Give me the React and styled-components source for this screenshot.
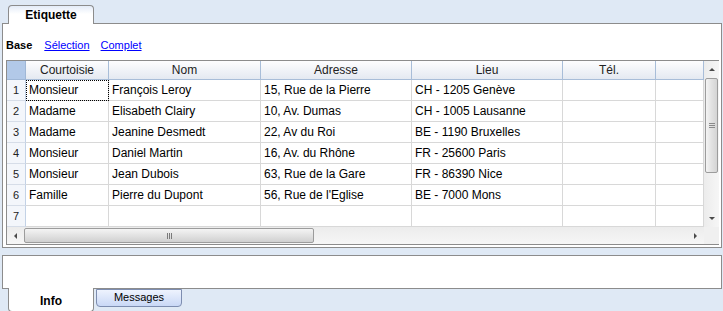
import styled, { createGlobalStyle } from "styled-components";

const GlobalStyle = createGlobalStyle`
  body {
    margin: 0;
    font-family: "Liberation Sans", Arial, sans-serif;
  }
`;

const rows = [
  ["Monsieur", "François Leroy", "15, Rue de la Pierre", "CH - 1205 Genève"],
  ["Madame", "Elisabeth Clairy", "10, Av. Dumas", "CH - 1005 Lausanne"],
  ["Madame", "Jeanine Desmedt", "22, Av du Roi", "BE - 1190 Bruxelles"],
  ["Monsieur", "Daniel Martin", "16, Av. du Rhône", "FR - 25600 Paris"],
  ["Monsieur", "Jean Dubois", "63, Rue de la Gare", "FR - 86390 Nice"],
  ["Famille", "Pierre du Dupont", "56, Rue de l'Eglise", "BE - 7000 Mons"],
  ["", "", "", ""],
];

const columns = ["Courtoisie", "Nom", "Adresse", "Lieu", "Tél.", ""];

function Arrow({ dir }) {
  const points = {
    up: "1,5 4,2 7,5",
    down: "1,2 4,5 7,2",
    left: "5,1 2,4 5,7",
    right: "2,1 5,4 2,7",
  }[dir];
  return (
    <svg width="8" height="8" viewBox="0 0 8 8">
      <polygon points={points} fill="#4a4a4a" />
    </svg>
  );
}

export default function App() {
  return (
    <Screen>
      <GlobalStyle />
      <TopTabs>
        <TopTab>Etiquette</TopTab>
      </TopTabs>
      <Panel>
        <ViewBar>
          <ViewLabel>Base</ViewLabel>
          <ViewLink>Sélection</ViewLink>
          <ViewLink>Complet</ViewLink>
        </ViewBar>
        <Grid>
          <Table>
            <Corner />
            {columns.map((c, i) => (
              <HeadCell key={i}>{c}</HeadCell>
            ))}
            {rows.map((r, ri) => (
              <Row key={ri}>
                <RowNum>{ri + 1}</RowNum>
                {r.map((v, ci) => (
                  <Cell key={ci} $focus={ri === 0 && ci === 0}>
                    {v}
                  </Cell>
                ))}
                <Cell />
                <Cell />
              </Row>
            ))}
          </Table>
          <VScroll>
            <ArrowBox>
              <Arrow dir="up" />
            </ArrowBox>
            <VTrack>
              <VThumb>
                <GripV>
                  <span />
                  <span />
                  <span />
                </GripV>
              </VThumb>
            </VTrack>
            <ArrowBox>
              <Arrow dir="down" />
            </ArrowBox>
          </VScroll>
          <HScroll>
            <ArrowBoxH>
              <Arrow dir="left" />
            </ArrowBoxH>
            <HTrack>
              <HThumb>
                <GripH>
                  <span />
                  <span />
                  <span />
                </GripH>
              </HThumb>
            </HTrack>
            <ArrowBoxH>
              <Arrow dir="right" />
            </ArrowBoxH>
          </HScroll>
          <ScrollCorner />
        </Grid>
      </Panel>
      <InfoPanel />
      <BottomTabs>
        <BottomTab $active>Info</BottomTab>
        <BottomTab>Messages</BottomTab>
      </BottomTabs>
    </Screen>
  );
}

const Screen = styled.div`
  width: 723px;
  height: 311px;
  background: #dfe9f5;
  overflow: hidden;
`;

const TopTabs = styled.div`
  display: flex;
  height: 23px;
  padding: 5px 0 0 8px;
  box-sizing: border-box;
`;

const TopTab = styled.div`
  width: 86px;
  height: 19px;
  box-sizing: border-box;
  border: 1px solid #8c8c8c;
  border-bottom: none;
  border-radius: 4px 4px 0 0;
  background: linear-gradient(#e4ecf8, #ffffff 45%);
  font-weight: bold;
  font-size: 12px;
  text-align: center;
  line-height: 19px;
  position: relative;
  z-index: 1;
`;

const Panel = styled.div`
  margin: 0 1px 0 2px;
  height: 225px;
  box-sizing: border-box;
  border: 1px solid #8c8c8c;
  background: #fff;
  display: flex;
  flex-direction: column;
`;

const ViewBar = styled.div`
  height: 36px;
  box-sizing: border-box;
  display: flex;
  align-items: center;
  gap: 11px;
  padding: 6px 0 0 3px;
  font-size: 11px;
`;

const ViewLabel = styled.span`
  font-weight: bold;
  color: #000;
  margin-right: 1px;
`;

const ViewLink = styled.span`
  color: #0000ff;
  text-decoration: underline;
  cursor: pointer;
`;

const Grid = styled.div`
  margin: 0 2px 0 3px;
  border: 1px solid #8c8c8c;
  display: grid;
  grid-template-columns: 697px 15px;
  grid-template-rows: 166px 17px;
`;

const Table = styled.div`
  display: grid;
  grid-template-columns: 19px 83px 152px 151px 151px 93px 48px;
  grid-template-rows: 19px repeat(7, 21px);
  overflow: hidden;
`;

const Corner = styled.div`
  background: #b2c9e8;
  border-right: 1px solid #9fb7d6;
  border-bottom: 1px solid #9fb7d6;
`;

const HeadCell = styled.div`
  box-sizing: border-box;
  background: linear-gradient(#fdfdfe, #e4e9f1);
  border-right: 1px solid #a8bdd8;
  border-bottom: 1px solid #a8bdd8;
  font-size: 12px;
  color: #222;
  text-align: center;
  line-height: 18px;
`;

const Row = styled.div`
  display: contents;
`;

const RowNum = styled.div`
  box-sizing: border-box;
  background: #f3f6fb;
  border-right: 1px solid #c3d2e6;
  border-bottom: 1px solid #d6dde8;
  font-size: 11px;
  color: #222;
  text-align: center;
  line-height: 21px;
`;

const Cell = styled.div`
  box-sizing: border-box;
  border-right: 1px solid #d8d8d8;
  border-bottom: 1px solid #d8d8d8;
  padding-left: 3px;
  font-size: 12px;
  color: #000;
  line-height: 21px;
  white-space: nowrap;
  overflow: hidden;
  outline: ${(p) => (p.$focus ? "1px dotted #000" : "none")};
  outline-offset: -1px;
`;

const VScroll = styled.div`
  display: flex;
  flex-direction: column;
  background: linear-gradient(90deg, #ececec, #f6f6f6);
`;

const ArrowBox = styled.div`
  height: 17px;
  display: flex;
  align-items: center;
  justify-content: center;
`;

const VTrack = styled.div`
  flex: 1;
  padding: 0 1px;
`;

const VThumb = styled.div`
  height: 95px;
  box-sizing: border-box;
  border: 1px solid #9c9c9c;
  border-radius: 2px;
  background: linear-gradient(90deg, #f4f4f4, #e2e2e2 50%, #d4d4d4);
  display: flex;
  align-items: center;
  justify-content: center;
`;

const GripV = styled.div`
  display: flex;
  flex-direction: column;
  gap: 1px;
  span {
    width: 6px;
    height: 1px;
    background: #8a8a8a;
  }
`;

const HScroll = styled.div`
  display: flex;
  background: linear-gradient(#ececec, #f6f6f6);
`;

const ArrowBoxH = styled.div`
  width: 17px;
  display: flex;
  align-items: center;
  justify-content: center;
`;

const HTrack = styled.div`
  flex: 1;
  padding: 1px 0;
`;

const HThumb = styled.div`
  width: 290px;
  height: 100%;
  box-sizing: border-box;
  border: 1px solid #9c9c9c;
  border-radius: 2px;
  background: linear-gradient(#f4f4f4, #e2e2e2 50%, #d0d0d0);
  display: flex;
  align-items: center;
  justify-content: center;
`;

const GripH = styled.div`
  display: flex;
  gap: 1px;
  span {
    width: 1px;
    height: 6px;
    background: #7a7a7a;
  }
`;

const ScrollCorner = styled.div`
  background: #f0f0f0;
`;

const InfoPanel = styled.div`
  margin: 7px 1px 0 2px;
  height: 34px;
  box-sizing: border-box;
  border: 1px solid #8c8c8c;
  background: #fff;
`;

const BottomTabs = styled.div`
  display: flex;
  gap: 2px;
  padding-left: 8px;
  margin-top: -1px;
`;

const BottomTab = styled.div`
  width: 86px;
  box-sizing: border-box;
  height: ${(p) => (p.$active ? "24px" : "18px")};
  margin-top: ${(p) => (p.$active ? "0" : "1px")};
  border: 1px solid ${(p) => (p.$active ? "#8c8c8c" : "#7d8db0")};
  border-top: ${(p) => (p.$active ? "none" : "1px solid #7d8db0")};
  border-radius: 0 0 4px 4px;
  background: ${(p) =>
    p.$active ? "#fff" : "linear-gradient(#eef3fe, #c9d8f6)"};
  font-size: ${(p) => (p.$active ? "12px" : "11px")};
  font-weight: ${(p) => (p.$active ? "bold" : "normal")};
  text-align: center;
  line-height: ${(p) => (p.$active ? "26px" : "15px")};
  color: #000;
  position: relative;
  z-index: 1;
`;
